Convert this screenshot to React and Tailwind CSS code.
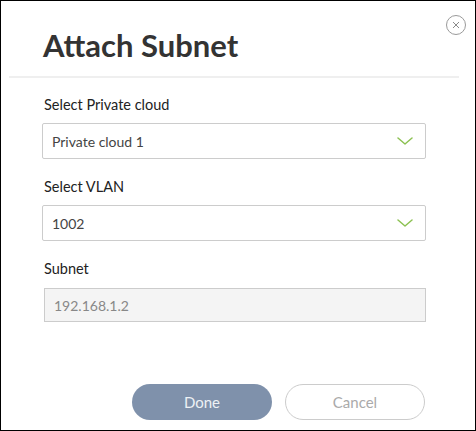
const Chevron = () => (
  <svg width="16" height="8" viewBox="0 0 16 8" fill="none">
    <path d="M1 1l7 6 7-6" stroke="#8cc152" strokeWidth="1.5" strokeLinecap="round" strokeLinejoin="round" />
  </svg>
);

const SelectBox = ({ value }) => (
  <div className="mt-[8px] h-[36px] border border-[#cccccc] rounded-[2px] flex items-center justify-between pl-[9px] pr-[12px] bg-white">
    <span className="text-[14px] text-[#444444]">{value}</span>
    <Chevron />
  </div>
);

const App = () => {
  return (
    <div className="relative w-[476px] h-[431px] border border-black bg-white flex flex-col font-['Lato',sans-serif]">
      {/*Close*/}
      <button className="absolute top-[14px] right-[9px] w-[20px] h-[20px] rounded-full border border-[#9a9a9a] flex items-center justify-center">
        <svg width="8" height="8" viewBox="0 0 8 8">
          <path d="M1 1l6 6M7 1l-6 6" stroke="#8a8a8a" strokeWidth="1" />
        </svg>
      </button>
      {/*Header*/}
      <div className="pt-[26px] pl-[42px]">
        <h1 className="text-[31px] leading-[36px] font-bold text-[#333333]">Attach Subnet</h1>
      </div>
      <div className="mt-[13px] ml-[8px] mr-[16px] h-[2px] bg-[#efefef]" />
      {/*Form*/}
      <div className="mt-[17px] pl-[41px] pr-[49px]">
        <label className="block ml-[2px] text-[14.5px] leading-[20px] text-[#222222]">Select Private cloud</label>
        <SelectBox value="Private cloud 1" />
        <label className="block ml-[2px] mt-[18px] text-[14.5px] leading-[20px] text-[#222222]">Select VLAN</label>
        <SelectBox value="1002" />
        <label className="block ml-[2px] mt-[18px] text-[14.5px] leading-[20px] text-[#222222]">Subnet</label>
        <div className="mt-[9px] ml-[2px] h-[34px] border border-[#cccccc] bg-[#f4f4f4] flex items-center pl-[9px]">
          <span className="text-[14px] text-[#888888]">192.168.1.2</span>
        </div>
      </div>
      {/*Actions*/}
      <div className="mt-auto pb-[10px] pr-[50px] flex justify-end gap-[13px]">
        <button className="w-[140px] h-[36px] rounded-full bg-[#7f91ab] text-[15px] text-[#eef1f5]">Done</button>
        <button className="w-[140px] h-[36px] rounded-full border border-[#cccccc] bg-white text-[15px] text-[#aaaaaa]">Cancel</button>
      </div>
    </div>
  );
};

export default App;
